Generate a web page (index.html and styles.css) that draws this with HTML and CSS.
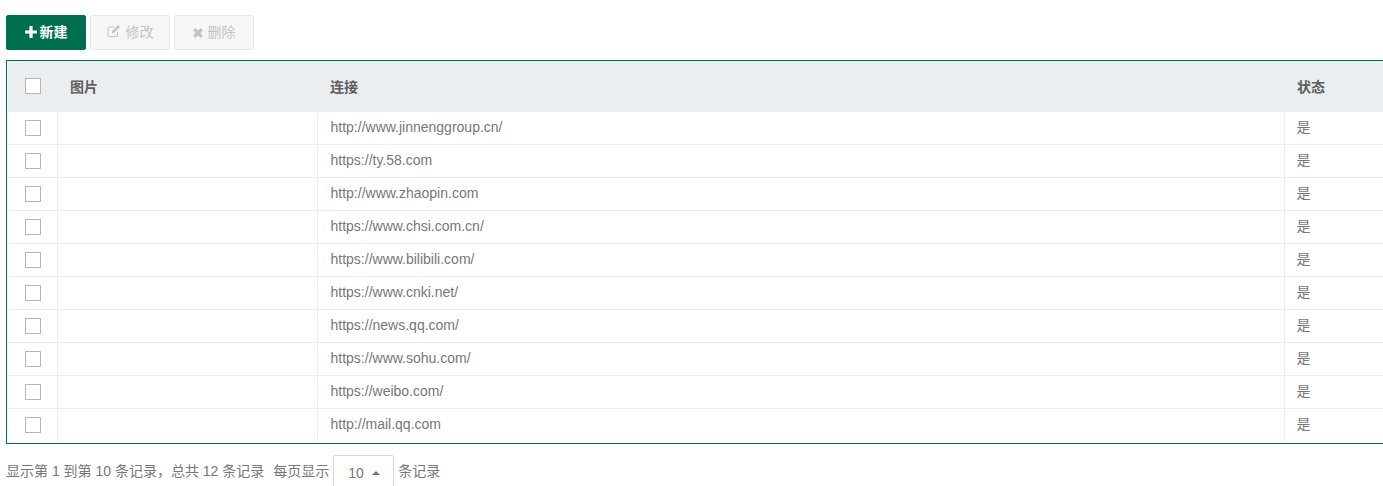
FILE: index.html
```html
<!DOCTYPE html>
<html lang="zh-CN">
<head>
<meta charset="utf-8">
<title>友情链接</title>
<link rel="stylesheet" href="styles.css">
</head>
<body>
<div class="toolbar">
  <button class="btn btn-primary" type="button">
    <svg class="icon" viewBox="0 0 12 12"><path d="M4.4 0h3.2v4.4H12v3.2H7.6V12H4.4V7.6H0V4.4h4.4z"/></svg><span class="btn-label">新建</span>
  </button>
  <button class="btn btn-disabled" type="button">
    <svg class="icon icon-edit" viewBox="0 0 14 14"><path d="M10.5 8v3a1.5 1.5 0 0 1-1.5 1.5H2.5A1.5 1.5 0 0 1 1 11V4.5A1.5 1.5 0 0 1 2.5 3H7" fill="none" stroke="currentColor"/><path d="M5 7.2 11.3.9l1.8 1.8L6.8 9H5z"/></svg><span class="btn-label">修改</span>
  </button>
  <button class="btn btn-disabled" type="button">
    <svg class="icon icon-x" viewBox="0 0 10 10"><path d="M2.4 0 5 2.6 7.6 0 10 2.4 7.4 5 10 7.6 7.6 10 5 7.4 2.4 10 0 7.6 2.6 5 0 2.4z"/></svg><span class="btn-label">删除</span>
  </button>
</div>
<div class="table-wrap">
  <table class="data-table">
    <colgroup>
      <col class="col-check"><col class="col-image"><col class="col-link"><col class="col-status">
    </colgroup>
    <thead>
      <tr>
        <th class="cell-check"><span class="checkbox"></span></th>
        <th>图片</th>
        <th>连接</th>
        <th>状态</th>
      </tr>
    </thead>
    <tbody>
      <tr><td class="cell-check"><span class="checkbox"></span></td><td></td><td class="cell-link"><span class="cell-text">http://www.jinnenggroup.cn/</span></td><td><span class="cell-text">是</span></td></tr>
      <tr><td class="cell-check"><span class="checkbox"></span></td><td></td><td class="cell-link"><span class="cell-text">https://ty.58.com</span></td><td><span class="cell-text">是</span></td></tr>
      <tr><td class="cell-check"><span class="checkbox"></span></td><td></td><td class="cell-link"><span class="cell-text">http://www.zhaopin.com</span></td><td><span class="cell-text">是</span></td></tr>
      <tr><td class="cell-check"><span class="checkbox"></span></td><td></td><td class="cell-link"><span class="cell-text">https://www.chsi.com.cn/</span></td><td><span class="cell-text">是</span></td></tr>
      <tr><td class="cell-check"><span class="checkbox"></span></td><td></td><td class="cell-link"><span class="cell-text">https://www.bilibili.com/</span></td><td><span class="cell-text">是</span></td></tr>
      <tr><td class="cell-check"><span class="checkbox"></span></td><td></td><td class="cell-link"><span class="cell-text">https://www.cnki.net/</span></td><td><span class="cell-text">是</span></td></tr>
      <tr><td class="cell-check"><span class="checkbox"></span></td><td></td><td class="cell-link"><span class="cell-text">https://news.qq.com/</span></td><td><span class="cell-text">是</span></td></tr>
      <tr><td class="cell-check"><span class="checkbox"></span></td><td></td><td class="cell-link"><span class="cell-text">https://www.sohu.com/</span></td><td><span class="cell-text">是</span></td></tr>
      <tr><td class="cell-check"><span class="checkbox"></span></td><td></td><td class="cell-link"><span class="cell-text">https://weibo.com/</span></td><td><span class="cell-text">是</span></td></tr>
      <tr><td class="cell-check"><span class="checkbox"></span></td><td></td><td class="cell-link"><span class="cell-text">http://mail.qq.com</span></td><td><span class="cell-text">是</span></td></tr>
    </tbody>
  </table>
</div>
<div class="pagination">
  <span>显示第 1 到第 10 条记录，总共 12 条记录</span>
  <span class="per-page">每页显示</span>
  <span class="page-size">10<span class="caret"></span></span>
  <span>条记录</span>
</div>
</body>
</html>
```
FILE: styles.css
```css
* { box-sizing: border-box; }
html, body { height: 486px; overflow: hidden; }
body {
  margin: 0;
  padding: 15px 0 0 6px;
  background: #fff;
  color: #676a6c;
  font-family: "Liberation Sans", "Noto Sans CJK SC", sans-serif;
  font-size: 14px;
}
.toolbar { display: flex; gap: 4px; height: 35px; }
.btn {
  display: flex;
  align-items: center;
  justify-content: center;
  width: 80px;
  height: 35px;
  padding: 0;
  border: 1px solid #e7eaec;
  border-radius: 2px;
  font: inherit;
  font-weight: 400;
}
.btn-label { line-height: 29px; height: 29px; }
.btn-primary { background: #006f4f; border-color: #006f4f; color: #fff; font-weight: 700; }
.btn-disabled { background: #f6f6f6; color: #c4c4c4; }
.icon { width: 12px; height: 12px; margin-right: 3px; margin-bottom: 1px; fill: currentColor; }
.icon-edit { width: 14px; height: 14px; margin-right: 5px; margin-bottom: 3px; }
.icon-x { width: 10px; height: 10px; margin-right: 5px; margin-bottom: 0; }
.table-wrap {
  margin-top: 10px;
  width: 1500px;
  height: 384px;
  border: 1px solid #006f4f;
  padding: 0 0 0 1px;
}
.data-table { border-collapse: collapse; table-layout: fixed; width: 1490px; }
.col-check { width: 49px; }
.col-image { width: 260px; }
.col-link { width: 967px; }
.col-status { width: 214px; }
th, td { text-align: left; }
th {
  height: 51px;
  padding: 0 0 2px 13px;
  background: #ebeef1;
  font-size: 14px;
  font-weight: 700;
  color: #5e5e5e;
}
td {
  height: 33px;
  padding: 0 0 0 12px;
  border-top: 1px solid #ecedee;
  border-left: 1px solid #ecedee;
  color: #777;
}
td.cell-link { padding-left: 13px; }
tbody tr:first-child td { height: 32px; border-top: 0; }
td.cell-check { border-left: 0; }
.cell-text { display: block; line-height: 20px; height: 20px; margin-bottom: 2px; }
th.cell-check, td.cell-check { padding-left: 17px; line-height: 0; }
.checkbox {
  display: inline-block;
  width: 16px;
  height: 16px;
  border: 1px solid #b5b5b5;
  background: #fff;
}
.pagination {
  display: flex;
  align-items: flex-start;
  margin-top: 11px;
  font-size: 14px;
  color: #777;
  line-height: 32px;
  height: 40px;
}
.per-page { margin-left: 9px; }
.page-size {
  display: flex;
  align-items: center;
  width: 61px;
  height: 40px;
  margin: 0 4px;
  padding: 0 0 5px 14px;
  border: 1px solid #d6d6d6;
  border-radius: 2px;
  font-size: 14px;
}
.caret {
  width: 0;
  height: 0;
  margin-left: 8px;
  border-left: 4px solid transparent;
  border-right: 4px solid transparent;
  border-bottom: 4px solid #777;
}
```
